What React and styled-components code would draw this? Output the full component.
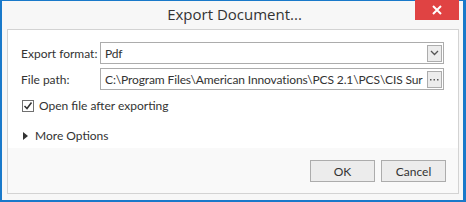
import React from 'react';
import styled, {createGlobalStyle} from 'styled-components';

const Global = createGlobalStyle`
    html, body {
        margin: 0;
        padding: 0;
        background: #ffffff;
    }
    body {
        font-family: Lato, "Open Sans", "Liberation Sans", sans-serif;
        color: #333333;
    }
`;

const Window = styled.div`
    width: 466px;
    height: 202px;
    box-sizing: border-box;
    background: #f7f7f7;
    border-style: solid;
    border-color: #1979ca;
    border-width: 1px 3px 2px 2px;
    display: flex;
    flex-direction: column;
`;

const TitleBar = styled.div`
    height: 28px;
    display: flex;
    align-items: center;
    justify-content: center;
    position: relative;
`;

const Title = styled.div`
    font-family: "Open Sans", sans-serif;
    font-size: 15px;
    color: #333333;
    margin-left: 4px;
    margin-top: -2px;
`;

const CloseButton = styled.div`
    position: absolute;
    top: -1px;
    right: 4px;
    width: 44px;
    height: 20px;
    background: #e04343;
    display: flex;
    align-items: center;
    justify-content: center;
`;

const Panel = styled.div`
    margin: 0 4px 0 5px;
    height: 165px;
    box-sizing: border-box;
    border: 1px solid #d3d3d3;
    display: flex;
    flex-direction: column;
`;

const Body = styled.div`
    background: #ffffff;
    height: 118px;
    box-sizing: border-box;
    padding: 12px 13px 0 13px;
    display: flex;
    flex-direction: column;
`;

const Row = styled.div`
    display: flex;
    align-items: center;
    height: 22px;
    margin-bottom: 4px;
`;

const Label = styled.div`
    width: 79px;
    flex-shrink: 0;
    font-size: 12px;
    color: #333333;
    white-space: nowrap;
`;

const Field = styled.div`
    flex: 1;
    min-width: 0;
    height: 22px;
    box-sizing: border-box;
    border: 1px solid #acacac;
    background: #ffffff;
    display: flex;
    align-items: center;
    padding: 0 1px 0 4px;
    margin-right: 1px;
`;

const FieldText = styled.div`
    flex: 1;
    min-width: 0;
    font-size: 12px;
    letter-spacing: -0.12px;
    color: #333333;
    white-space: nowrap;
    overflow: hidden;
`;

const SmallButton = styled.div`
    width: 15px;
    height: 17px;
    flex-shrink: 0;
    box-sizing: border-box;
    border: 1px solid #acacac;
    background: #ececec;
    display: flex;
    align-items: center;
    justify-content: center;
    margin-left: 4px;
`;

const Check = styled.div`
    display: flex;
    align-items: center;
    gap: 5px;
    font-size: 12px;
    margin-top: 4px;
    margin-left: 1px;
`;

const Box = styled.div`
    width: 12px;
    height: 12px;
    box-sizing: border-box;
    border: 1px solid #707070;
    background: #ffffff;
    display: flex;
    align-items: center;
    justify-content: center;
`;

const Expander = styled.div`
    display: flex;
    align-items: center;
    gap: 7px;
    font-size: 12px;
    margin-top: 15px;
    margin-left: 2px;
`;

const Triangle = styled.div`
    width: 0;
    height: 0;
    border-top: 4px solid transparent;
    border-bottom: 4px solid transparent;
    border-left: 5px solid #333333;
`;

const Footer = styled.div`
    flex: 1;
    background: #f9f9f9;
    display: flex;
    justify-content: flex-end;
    align-items: flex-start;
    gap: 6px;
    padding: 12px 12px 0 0;
`;

const Button = styled.div`
    width: 65px;
    height: 22px;
    box-sizing: border-box;
    border: 1px solid #acacac;
    background: #ececec;
    display: flex;
    align-items: center;
    justify-content: center;
    font-size: 12px;
    color: #333333;
`;

export default function App() {
    return (
        <>
            <Global/>
            <Window>
                <TitleBar>
                    <Title>Export Document...</Title>
                    <CloseButton>
                        <svg width="10" height="10" viewBox="0 0 10 10">
                            <path d="M1 1 L9 9 M9 1 L1 9" stroke="#ffffff" strokeWidth="2"/>
                        </svg>
                    </CloseButton>
                </TitleBar>
                <Panel>
                    <Body>
                        <Row>
                            <Label>Export format:</Label>
                            <Field>
                                <FieldText>Pdf</FieldText>
                                <SmallButton>
                                    <svg width="9" height="6" viewBox="0 0 9 6">
                                        <path d="M1 1 L4.5 4.5 L8 1" stroke="#555555" strokeWidth="1.3" fill="none"/>
                                    </svg>
                                </SmallButton>
                            </Field>
                        </Row>
                        <Row>
                            <Label>File path:</Label>
                            <Field>
                                <FieldText>C:\Program Files\American Innovations\PCS 2.1\PCS\CIS Sur</FieldText>
                                <SmallButton>
                                    <svg width="9" height="3" viewBox="0 0 9 3">
                                        <rect x="0" y="1" width="1.5" height="1.5" fill="#555555"/>
                                        <rect x="3.5" y="1" width="1.5" height="1.5" fill="#555555"/>
                                        <rect x="7" y="1" width="1.5" height="1.5" fill="#555555"/>
                                    </svg>
                                </SmallButton>
                            </Field>
                        </Row>
                        <Check>
                            <Box>
                                <svg width="10" height="10" viewBox="0 0 10 10">
                                    <path d="M1.5 5 L4 7.5 L8.5 1.5" stroke="#333333" strokeWidth="1.5" fill="none"/>
                                </svg>
                            </Box>
                            Open file after exporting
                        </Check>
                        <Expander>
                            <Triangle/>
                            More Options
                        </Expander>
                    </Body>
                    <Footer>
                        <Button>OK</Button>
                        <Button>Cancel</Button>
                    </Footer>
                </Panel>
            </Window>
        </>
    );
}
